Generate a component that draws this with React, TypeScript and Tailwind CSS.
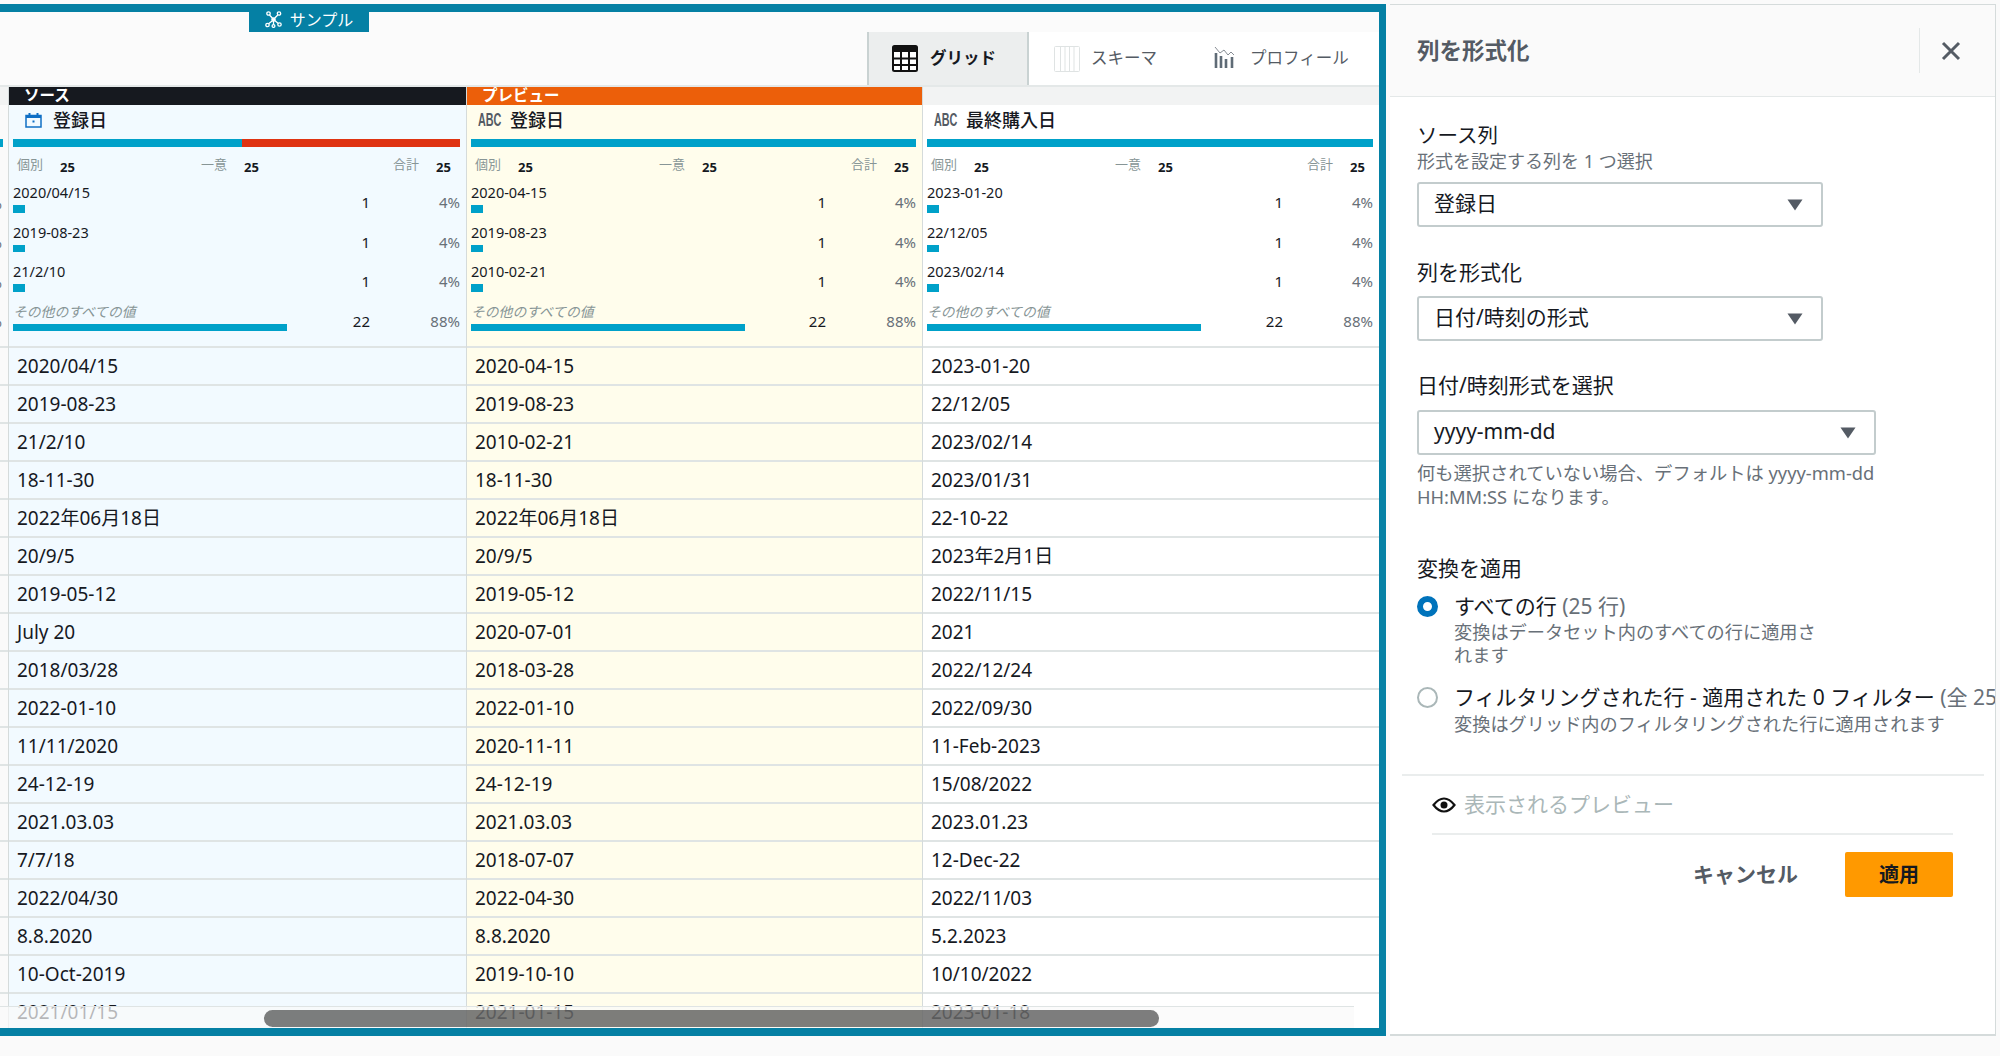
import React from 'react';

const FONT = "font-['Noto_Sans','Noto_Sans_CJK_JP',sans-serif]";

const col1 = ['2020/04/15', '2019-08-23', '21/2/10', '18-11-30', '2022年06月18日', '20/9/5', '2019-05-12', 'July 20', '2018/03/28', '2022-01-10', '11/11/2020', '24-12-19', '2021.03.03', '7/7/18', '2022/04/30', '8.8.2020', '10-Oct-2019', '2021/01/15'];
const col2 = ['2020-04-15', '2019-08-23', '2010-02-21', '18-11-30', '2022年06月18日', '20/9/5', '2019-05-12', '2020-07-01', '2018-03-28', '2022-01-10', '2020-11-11', '24-12-19', '2021.03.03', '2018-07-07', '2022-04-30', '8.8.2020', '2019-10-10', '2021-01-15'];
const col3 = ['2023-01-20', '22/12/05', '2023/02/14', '2023/01/31', '22-10-22', '2023年2月1日', '2022/11/15', '2021', '2022/12/24', '2022/09/30', '11-Feb-2023', '15/08/2022', '2023.01.23', '12-Dec-22', '2022/11/03', '5.2.2023', '10/10/2022', '2023-01-18'];

const SampleIcon = () => (
  <svg width="17" height="17" viewBox="0 0 17 17" fill="none" stroke="#fff" strokeWidth="1.3">
    <circle cx="3.5" cy="2.5" r="1.7" />
    <circle cx="14" cy="2.5" r="1.7" />
    <circle cx="2.5" cy="14" r="1.7" />
    <circle cx="8.5" cy="15" r="1.4" />
    <circle cx="14.5" cy="13.5" r="1.7" />
    <circle cx="8.5" cy="8.5" r="1.6" fill="#fff" />
    <path d="M4.5 4l3 3.2M13 3.8l-3.4 3.5M7.4 9.8l-3.8 3M8.5 10v3.6M9.8 9.6l3.5 2.8" />
  </svg>
);

const GridIcon = () => (
  <svg width="26" height="27" viewBox="0 0 26 27" fill="none">
    <rect x="1" y="1" width="24" height="25" rx="1.5" fill="#fff" stroke="#111" strokeWidth="2" />
    <rect x="1" y="1" width="24" height="6" fill="#111" />
    <path d="M9 7v19M17 7v19M1 13.5h24M1 20h24" stroke="#111" strokeWidth="2" />
  </svg>
);

const SchemaIcon = () => (
  <svg width="26" height="26" viewBox="0 0 26 26" fill="none" stroke="#dfe3e3" strokeWidth="1">
    <rect x="0.5" y="0.5" width="25" height="25" rx="1" />
    <path d="M6.5 1v24M11 1v24M15.5 1v24M20 1v24" />
  </svg>
);

const ProfileIcon = () => (
  <svg width="21" height="24" viewBox="0 0 21 24" fill="none">
    <path d="M1 3l5 6 4-3 4 5 3-3 3 3" stroke="#687078" strokeWidth="0.8" />
    <path d="M2 9v15M7 12v12M12 15v9M18 13v11" stroke="#5f6b76" strokeWidth="2.6" />
  </svg>
);

const CalendarIcon = () => (
  <svg width="17" height="15" viewBox="0 0 17 15" fill="none" stroke="#0f6fc5" strokeWidth="1.5">
    <rect x="1" y="2.5" width="15" height="11.5" />
    <path d="M1 4h15M4.5 0v3M12.5 0v3" strokeWidth="2" />
    <rect x="7.5" y="7.5" width="2" height="2" fill="#0f6fc5" stroke="none" />
  </svg>
);

const EyeIcon = () => (
  <svg width="24" height="16" viewBox="0 0 24 16" fill="none">
    <path d="M1.5 8C5 3.5 8.3 1.5 12 1.5S19 3.5 22.5 8C19 12.5 15.7 14.5 12 14.5S5 12.5 1.5 8z" stroke="#111" strokeWidth="2.2" />
    <circle cx="12" cy="8" r="3.5" fill="#111" />
  </svg>
);

const Caret = () => (
  <svg width="16" height="12" viewBox="0 0 16 12">
    <path d="M0.5 0.5h15L8 11.5z" fill="#545b64" />
  </svg>
);

const Abc = () => (
  <span className="-ml-[5px] w-[21px] text-[18px] font-bold text-[#545b64] font-['Liberation_Sans',sans-serif] inline-block origin-left scale-x-[0.6] whitespace-nowrap">ABC</span>
);

const TopRow = ({ value, count, pct, other }: { value: string; count: string; pct: string; other?: boolean }) => (
  <div className="flex items-center h-[39.5px]">
    <div className="flex-1 min-w-0 self-start">
      <div className={other ? 'h-[20px] leading-[20px] text-[13.8px] italic text-[#879596]' : 'h-[20px] leading-[18px] text-[14.5px] text-[#16191f]'}>{value}</div>
      <div className="mt-[2px] h-[7.5px] bg-[#00a1c9]" style={{ width: other ? 274 : 12 }} />
    </div>
    <div className="text-[15px] leading-[20px] pb-[1px] text-[#16191f]">{count}</div>
    <div className="w-[90px] text-right text-[15px] leading-[20px] pb-[1px] text-[#687078]">{pct}</div>
  </div>
);

const Stat = ({ label, w }: { label: string; w: string }) => (
  <div className={`flex items-center gap-[17px] ${w}`}>
    <span className="text-[13px] text-[#879596] -mt-[6px]">{label}</span>
    <span className="text-[13px] font-bold text-[#16191f]">25</span>
  </div>
);

const Column = ({ values, bg, title, icon, tag, tagBg, split, widthCls, firstTop, secondTop, thirdTop }: {
  values: string[]; bg: string; title: string; icon: React.ReactNode; tag: string; tagBg: string; split?: boolean; widthCls: string;
  firstTop: string; secondTop: string; thirdTop: string;
}) => (
  <div className={`${widthCls} min-w-0 shrink-0 flex flex-col ${bg} border-l border-[#d5dbdb]`}>
    <div className={`h-[18px] shrink-0 ${tagBg} pl-[15px] text-[15.5px] leading-[17px] font-bold text-white overflow-hidden`}>{tag}</div>
    <div className="h-[243px] shrink-0 border-b-2 border-[#dfe4e4] pl-[4px] pr-[6px]">
      <div className="h-[34px] pb-[4px] flex items-center gap-[11px] pl-[12px]">
        {icon}
        <span className="text-[18px] font-medium text-[#16191f]">{title}</span>
      </div>
      <div className="h-[8px] flex bg-[#00a1c9]">
        {split && <div className="ml-[229px] flex-1 bg-[#df3312]" />}
      </div>
      <div className="h-[36px] flex items-center pl-[4px] pt-[5px]">
        <Stat label="個別" w="w-[184px]" />
        <Stat label="一意" w="w-[192px]" />
        <Stat label="合計" w="" />
      </div>
      <TopRow value={firstTop} count="1" pct="4%" />
      <TopRow value={secondTop} count="1" pct="4%" />
      <TopRow value={thirdTop} count="1" pct="4%" />
      <TopRow value="その他のすべての値" count="22" pct="88%" other />
    </div>
    <div className="flex-1 overflow-hidden">
      {values.map((v, i) => (
        <div key={i} className="h-[38px] border-b-2 border-[#dfe4e4] pl-[8px] text-[19px] leading-[36px] text-[#16191f] whitespace-nowrap">{v}</div>
      ))}
    </div>
  </div>
);

const Select = ({ value, w }: { value: string; w: string }) => (
  <div className={`${w} h-[45px] border-2 border-[#c3cccd] rounded-[3px] bg-white flex items-center justify-between pl-[15px] pr-[18px] text-[21px] text-[#16191f]`}>
    <span className="-mt-[2px]">{value}</span>
    <Caret />
  </div>
);

export default function App() {
  return (
    <div className={`w-[2000px] h-[1056px] bg-[#fafafa] flex overflow-hidden ${FONT}`}>
      <div className="w-[1386px] h-[1036px] shrink-0 pt-[4px]">
        <div className="relative h-[1032px] border-t-[8px] border-b-[8px] border-r-[7px] border-[#0580a4] flex flex-col">
          <div className="h-[75px] shrink-0 bg-[#fbfbfb] relative flex justify-end items-end border-b-2 border-[#e4e8e8]">
            <div className="absolute left-[249px] top-0 w-[120px] h-[20px] pb-[5px] bg-[#0580a4] flex items-center justify-center gap-[8px] text-[16px] text-white">
              <SampleIcon />
              <span>サンプル</span>
            </div>
            <div className="w-[512px] h-[53px] bg-white flex items-center">
              <div className="w-[162px] h-full bg-[#eceeee] border-x-2 border-[#c9d2d2] flex items-center pl-[23px] gap-[12px] text-[16.5px] font-bold text-[#16191f]">
                <GridIcon />
                <span>グリッド</span>
              </div>
              <div className="ml-[25px] flex items-center gap-[11px] text-[16.5px] text-[#545b64]">
                <SchemaIcon />
                <span>スキーマ</span>
              </div>
              <div className="ml-[57px] flex items-center gap-[15px] text-[16.5px] text-[#545b64]">
                <div className="mb-[5px]"><ProfileIcon /></div>
                <span>プロフィール</span>
              </div>
            </div>
          </div>

          <div className="flex-1 flex overflow-hidden">
            <div className="w-[8px] shrink-0 overflow-hidden flex flex-col">
              <div className="h-[18px] bg-[#f2f3f3] shrink-0" />
              <div className="h-[243px] shrink-0 border-b-2 border-[#dfe4e4]">
                <div className="h-[34px]" />
                <div className="h-[8px] w-[3px] bg-[#00a1c9]" />
                <div className="h-[36px]" />
                {[0, 1, 2, 3].map((n) => (
                  <div key={n} className="h-[39.5px] flex items-center justify-end pr-[6px] text-[15px] text-[#687078]">%</div>
                ))}
              </div>
              <div className="flex-1">
                {col1.map((v) => (
                  <div key={v} className="h-[38px] border-b-2 border-[#dfe4e4]" />
                ))}
              </div>
            </div>
            <Column widthCls="w-[458px]" values={col1} bg="bg-[#f2faff]" title="登録日" icon={<CalendarIcon />} tag="ソース" tagBg="bg-[#16191f]" split firstTop="2020/04/15" secondTop="2019-08-23" thirdTop="21/2/10" />
            <Column widthCls="w-[456px]" values={col2} bg="bg-[#fffdec]" title="登録日" icon={<Abc />} tag="プレビュー" tagBg="bg-[#ec5f0a]" firstTop="2020-04-15" secondTop="2019-08-23" thirdTop="2010-02-21" />
            <Column widthCls="flex-1" values={col3} bg="bg-white" title="最終購入日" icon={<Abc />} tag="" tagBg="bg-[#f2f3f3]" firstTop="2023-01-20" secondTop="22/12/05" thirdTop="2023/02/14" />
          </div>

          <div className="absolute left-0 bottom-0 w-[1354px] h-[22px] bg-[#fafafa]/70 border-t border-[#dfe4e4]">
            <div className="absolute left-[264px] top-[3px] w-[895px] h-[17px] rounded-full bg-black/50" />
          </div>
        </div>
      </div>

      <div className="w-[612px] shrink-0 pl-[4px] pr-[2px] pt-[4px]">
        <div className="h-[1032px] bg-white border-r border-b-2 border-t border-[#d5dbdb] flex flex-col">
          <div className="h-[92px] shrink-0 bg-[#fafafa] border-b border-[#e4e8e8] flex items-center pl-[27px]">
            <span className="flex-1 text-[22.5px] font-bold text-[#545b64]">列を形式化</span>
            <div className="h-[45px] w-[62px] border-l border-[#e4e8e8] flex items-center justify-center mr-[14px]">
              <svg width="20" height="20" viewBox="0 0 20 20" fill="none" stroke="#545b64" strokeWidth="3">
                <path d="M2 2l16 16M18 2L2 18" />
              </svg>
            </div>
          </div>

          <div className="pl-[27px] pt-[24px] flex-1 min-w-0 overflow-hidden flex flex-col">
            <div className="text-[20.5px] leading-[28px] text-[#16191f]">ソース列</div>
            <div className="text-[18px] leading-[25px] text-[#687078] mb-[8px]">形式を設定する列を 1 つ選択</div>
            <Select value="登録日" w="w-[406px]" />

            <div className="text-[21px] leading-[28px] text-[#16191f] mt-[31px] mb-[10px]">列を形式化</div>
            <Select value="日付/時刻の形式" w="w-[406px]" />

            <div className="text-[21px] leading-[28px] text-[#16191f] mt-[30px] mb-[11px]">日付/時刻形式を選択</div>
            <Select value="yyyy-mm-dd" w="w-[459px]" />
            <div className="w-[480px] text-[18.3px] leading-[24px] text-[#687078] mt-[6px]">
              何も選択されていない場合、デフォルトは yyyy-mm-dd<br />HH:MM:SS になります。
            </div>

            <div className="text-[21px] leading-[28px] text-[#16191f] mt-[45px] mb-[10px]">変換を適用</div>
            <div className="flex gap-[16px]">
              <div className="w-[21px] h-[21px] mt-[4px] rounded-full border-[6.5px] border-[#0073bb] bg-white shrink-0" />
              <div>
                <div className="text-[21px] leading-[28px] text-[#16191f]">すべての行 <span className="text-[#687078]">(25 行)</span></div>
                <div className="w-[372px] text-[18.2px] leading-[23px] text-[#687078] mt-[1px]">変換はデータセット内のすべての行に適用されます</div>
              </div>
            </div>
            <div className="flex gap-[16px] mt-[16px] whitespace-nowrap">
              <div className="w-[21px] h-[21px] mt-[4px] rounded-full border-2 border-[#aab7b8] bg-white shrink-0" />
              <div>
                <div className="text-[21px] leading-[28px] text-[#16191f]">フィルタリングされた行 - 適用された 0 フィルター <span className="text-[#687078]">(全 25 行)</span></div>
                <div className="text-[18.2px] leading-[24px] text-[#687078] mt-[1px]">変換はグリッド内のフィルタリングされた行に適用されます</div>
              </div>
            </div>

            <div className="-ml-[15px] w-[582px] mt-[38px] border-t-2 border-[#eaeded]" />
            <div className="ml-[15px] w-[521px] h-[59px] pt-[1px] border-b-2 border-[#eaeded] flex items-center gap-[8px]">
              <EyeIcon />
              <span className="text-[21px] text-[#aab7b8]">表示されるプレビュー</span>
            </div>
            <div className="ml-[15px] w-[521px] mt-[17px] flex justify-end items-center gap-[47px]">
              <span className="text-[21px] font-bold text-[#545b64]">キャンセル</span>
              <div className="w-[108px] h-[45px] bg-[#ff9900] rounded-[2px] flex items-center justify-center text-[20px] font-bold text-[#16191f]">適用</div>
            </div>
          </div>
        </div>
      </div>
    </div>
  );
}
